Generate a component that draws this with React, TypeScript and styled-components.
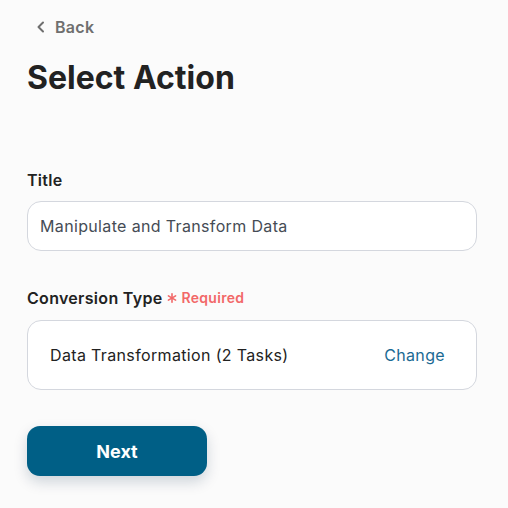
import React from "react";
import styled, { createGlobalStyle } from "styled-components";

const Global = createGlobalStyle`
  html, body { margin: 0; padding: 0; background: #fbfbfb; }
  body { font-family: Inter, "Noto Sans", sans-serif; color: #222; }
  * { box-sizing: border-box; }
`;

const Page = styled.div`
  width: 508px;
  height: 508px;
  padding: 17px 31px 0 27px;
  display: flex;
  flex-direction: column;
`;

const BackLink = styled.a`
  display: flex;
  align-items: center;
  gap: 9px;
  margin-left: 9px;
  font-size: 16px;
  font-weight: 600;
  letter-spacing: 0.3px;
  color: #6f6f6f;
  height: 20px;
  cursor: pointer;
`;

const Heading = styled.h1`
  margin: 22px 0 0;
  font-size: 32px;
  font-weight: 700;
  color: #222222;
  line-height: 38px;
`;

const Field = styled.div<{ $top: number }>`
  margin-top: ${(p) => p.$top}px;
  display: flex;
  flex-direction: column;
`;

const Label = styled.div`
  display: flex;
  align-items: center;
  gap: 5px;
  font-size: 16px;
  font-weight: 600;
  letter-spacing: 0.3px;
  color: #222;
  line-height: 20px;
  height: 20px;
`;

const Required = styled.span`
  display: flex;
  align-items: center;
  gap: 4px;
  font-size: 14px;
  font-weight: 600;
  letter-spacing: 0.3px;
  color: #f26868;
`;

const Input = styled.div`
  margin-top: 11px;
  height: 50px;
  border: 1px solid #d4d7de;
  border-radius: 14px;
  background: #ffffff;
  display: flex;
  align-items: center;
  padding: 0 12px;
  font-size: 16px;
  letter-spacing: 0.35px;
  color: #454c55;
`;

const SelectBox = styled.div`
  margin-top: 12px;
  height: 70px;
  border: 1px solid #d4d7de;
  border-radius: 14px;
  background: #ffffff;
  display: flex;
  align-items: center;
  justify-content: space-between;
  padding: 0 31px 0 22px;
  font-size: 16px;
  letter-spacing: 0.35px;
  color: #222;
`;

const ChangeLink = styled.span`
  color: #1b6a93;
  font-size: 16px;
  font-weight: 400;
  letter-spacing: 0.35px;
`;

const NextButton = styled.button`
  margin-top: 36px;
  width: 180px;
  height: 50px;
  border: none;
  border-radius: 13px;
  background: #005f86;
  color: #fff;
  font-family: Inter, sans-serif;
  font-size: 18px;
  font-weight: 700;
  box-shadow: 0 6px 14px rgba(0, 40, 70, 0.18);
  cursor: pointer;
`;

export default function App() {
  return (
    <>
      <Global />
      <Page>
        <BackLink>
          <svg width="10" height="12" viewBox="0 0 10 12" fill="none">
            <path d="M7 1.5L2.5 6L7 10.5" stroke="#6f6f6f" strokeWidth="2" strokeLinecap="round" strokeLinejoin="round" />
          </svg>
          Back
        </BackLink>
        <Heading>Select Action</Heading>
        <Field $top={73}>
          <Label>Title</Label>
          <Input>Manipulate and Transform Data</Input>
        </Field>
        <Field $top={37}>
          <Label>
            Conversion Type
            <Required>
              <svg width="10" height="10" viewBox="0 0 10 10">
                <g stroke="#f26868" strokeWidth="1.6" strokeLinecap="round">
                  <line x1="5" y1="0.8" x2="5" y2="9.2" />
                  <line x1="1.4" y1="2.9" x2="8.6" y2="7.1" />
                  <line x1="1.4" y1="7.1" x2="8.6" y2="2.9" />
                </g>
              </svg>
              Required
            </Required>
          </Label>
          <SelectBox>
            <span>Data Transformation (2 Tasks)</span>
            <ChangeLink>Change</ChangeLink>
          </SelectBox>
        </Field>
        <NextButton>Next</NextButton>
      </Page>
    </>
  );
}
